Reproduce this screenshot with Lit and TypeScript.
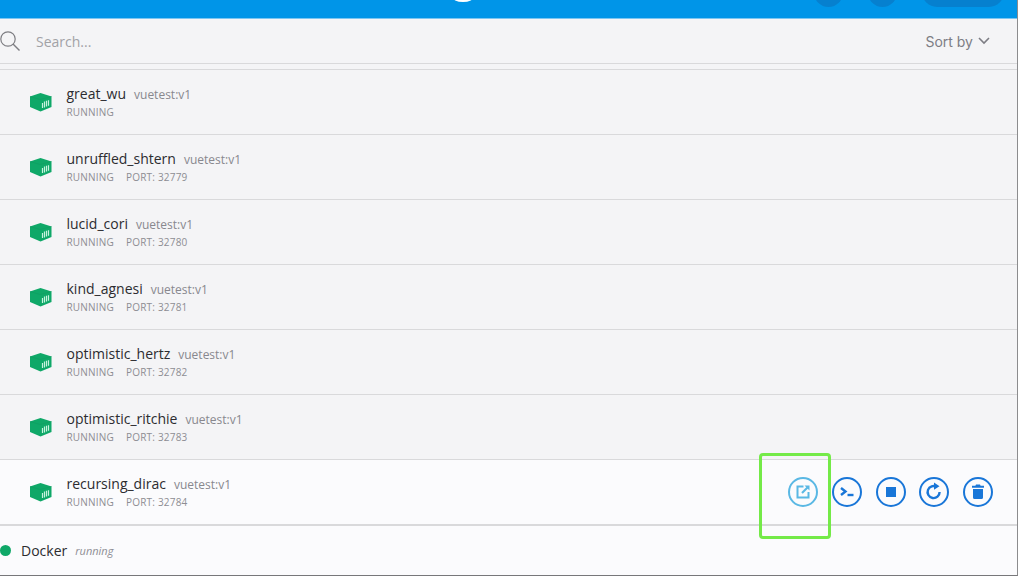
import {LitElement, html, css, svg} from 'lit'
import {customElement} from 'lit/decorators.js'

const containers = [
  {name: 'great_wu', image: 'vuetest:v1', port: ''},
  {name: 'unruffled_shtern', image: 'vuetest:v1', port: '32779'},
  {name: 'lucid_cori', image: 'vuetest:v1', port: '32780'},
  {name: 'kind_agnesi', image: 'vuetest:v1', port: '32781'},
  {name: 'optimistic_hertz', image: 'vuetest:v1', port: '32782'},
  {name: 'optimistic_ritchie', image: 'vuetest:v1', port: '32783'},
  {name: 'recursing_dirac', image: 'vuetest:v1', port: '32784'},
]

const box = html`
  <svg class="box" width="24" height="20" viewBox="0 0 24 20">
    <path d="M11.5 1 L22.5 4.5 V15 L11.5 19.5 L1 15 V4.5 Z" fill="#0fa868"/>
    <path d="M11 7.5 L22.5 4.5 M1 4.5 L11 7.5" stroke="#0d9c60" stroke-width=".6" fill="none"/>
    <path d="M13.5 16 V11 M15.5 15.4 V9.5 M17.5 14.6 V8.8 M19.5 13.8 V8.2" stroke="#c8f2df" stroke-width="1.2"/>
  </svg>
`

const actions = [
  svg`<path d="M15.5 9.5 H9.5 V20.5 H20.5 V15" fill="none" stroke="currentColor" stroke-width="2"/><path d="M14 16 L20 10" fill="none" stroke="currentColor" stroke-width="2.2"/><path d="M16.5 8.5 H21.5 V13.5 Z" fill="currentColor"/>`,
  svg`<path d="M9 11 L13.5 14.5 L9 18" fill="none" stroke="currentColor" stroke-width="2.4"/><path d="M15.5 18 H21.5" stroke="currentColor" stroke-width="2.4"/>`,
  svg`<rect x="10" y="10" width="10" height="10" fill="currentColor"/>`,
  svg`<path d="M17.8 10 A6 6 0 1 0 20.6 15" fill="none" stroke="currentColor" stroke-width="2.4"/><path d="M15 5.5 L20.5 9.2 L15 12.8 Z" fill="currentColor"/>`,
  svg`<path d="M10 12 H20 V20.5 Q20 22 18.5 22 H11.5 Q10 22 10 20.5 Z M9 8.8 H12.4 L13 7.6 H17 L17.6 8.8 H21 V10.8 H9 Z" fill="currentColor"/>`,
]

@customElement('app-root')
export class AppRoot extends LitElement {
  static styles = css`
    :host {
      display: block;
      width: 1018px;
      height: 576px;
      overflow: hidden;
      font-family: "Open Sans", sans-serif;
      background: #f4f4f6;
    }
    .window {
      position: relative;
      height: 575px;
      width: 1017px;
      border-right: 1px solid #8c8c8e;
      border-bottom: 1px solid #77777a;
      display: flex;
      flex-direction: column;
      overflow: hidden;
    }
    .topbar {
      flex: none;
      height: 19px;
      background: #0095e8;
      border-bottom: 1px solid #7cc6f2;
      box-sizing: border-box;
      overflow: hidden;
      display: flex;
      justify-content: flex-end;
      padding-right: 13px;
      gap: 25px;
    }
    .logo {
      position: absolute;
      left: 452px;
      top: -9px;
      width: 22px;
      height: 11px;
      border-radius: 50%;
      background: #fff;
    }
    .pill {
      width: 29px;
      height: 30px;
      margin-top: -23px;
      border-radius: 15px;
      background: #0680cf;
    }
    .pill.wide {
      width: 82px;
    }
    .search {
      flex: none;
      height: 44px;
      display: flex;
      align-items: center;
      padding: 0 11px 0 0;
      border-bottom: 1px solid #d9d9db;
      color: #a2a2a6;
      font-size: 14px;
    }
    .search svg {
      flex: none;
      margin-right: 16px;
    }
    .search .hint {
      flex: 1;
    }
    .sort {
      display: flex;
      align-items: center;
      gap: 5px;
      color: #7d7d84;
      font-family: "Inter", sans-serif;
      font-size: 14px;
    }
    .sort svg {
      margin-right: 16px;
    }
    .list {
      flex: none;
      margin-top: 5px;
      border-top: 1px solid #d9d9db;
    }
    .row {
      height: 64px;
      display: flex;
      align-items: center;
      padding-left: 29px;
      border-bottom: 1px solid #d9d9db;
      box-sizing: content-box;
    }
    .row.active {
      background: #fbfbfd;
      border-bottom: 2px solid #d9d9db;
    }
    .box {
      flex: none;
      margin-right: 13.5px;
    }
    .text {
      flex: 1;
      margin-top: -2px;
    }
    .title {
      display: flex;
      align-items: baseline;
      gap: 8px;
      line-height: 20px;
    }
    .name {
      font-size: 14px;
      color: #2c2c30;
    }
    .image {
      font-size: 12px;
      color: #88888e;
    }
    .meta {
      display: flex;
      gap: 12px;
      line-height: 14px;
      font-size: 10px;
      letter-spacing: 0.2px;
      color: #8d8d93;
    }
    .actions {
      display: flex;
      gap: 13.75px;
      padding-right: 24px;
    }
    .action {
      width: 30px;
      height: 30px;
      color: #1976d8;
    }
    .action.open {
      color: #5ab8e4;
    }
    .action svg {
      display: block;
    }
    .footer {
      flex: 1;
      background: #fbfbfd;
      display: flex;
      align-items: center;
      color: #2c2c30;
      font-size: 14px;
    }
    .dot {
      width: 11px;
      height: 11px;
      border-radius: 50%;
      background: #0fa868;
      margin: 0 10px 0 0;
    }
    .state {
      margin-left: 8px;
      font-size: 11px;
      font-style: italic;
      color: #8d8d93;
    }
    .highlight {
      position: absolute;
      left: 759px;
      top: 453px;
      width: 72px;
      height: 86px;
      box-sizing: border-box;
      border: 3px solid #74ea48;
      border-radius: 4px;
    }
  `

  render() {
    return html`
      <div class="window">
        <div class="topbar">
          <span class="logo"></span>
          <span class="pill"></span>
          <span class="pill"></span>
          <span class="pill wide"></span>
        </div>
        <div class="search">
          <svg width="20" height="22" viewBox="0 0 20 22">
            <circle cx="8" cy="9" r="7.2" fill="none" stroke="#7d7d82" stroke-width="1.2"/>
            <path d="M13 14 L19.5 20.5" stroke="#7d7d82" stroke-width="1.4"/>
          </svg>
          <span class="hint">Search...</span>
          <span class="sort">Sort by
            <svg width="12" height="8" viewBox="0 0 12 8">
              <path d="M1 1 L6 6 L11 1" fill="none" stroke="#7d7d84" stroke-width="1.6"/>
            </svg>
          </span>
        </div>
        <div class="list">
          ${containers.map((c, i) => html`
            <div class="row ${i === containers.length - 1 ? 'active' : ''}">
              ${box}
              <div class="text">
                <div class="title">
                  <span class="name">${c.name}</span>
                  <span class="image">${c.image}</span>
                </div>
                <div class="meta">
                  <span>RUNNING</span>
                  ${c.port ? html`<span>PORT: ${c.port}</span>` : ''}
                </div>
              </div>
              ${i === containers.length - 1 ? html`
                <div class="actions">
                  ${actions.map((icon, n) => html`
                    <span class="action ${n === 0 ? 'open' : ''}">
                      <svg width="30" height="30" viewBox="0 0 30 30">
                        <circle cx="15" cy="15" r="14" fill="none" stroke="currentColor" stroke-width="2"/>
                        ${icon}
                      </svg>
                    </span>
                  `)}
                </div>
              ` : ''}
            </div>
          `)}
        </div>
        <div class="footer">
          <span class="dot"></span>
          <span>Docker</span>
          <span class="state">running</span>
        </div>
        <div class="highlight"></div>
      </div>
    `
  }
}

declare global {
  interface HTMLElementTagNameMap {
    'app-root': AppRoot
  }
}
